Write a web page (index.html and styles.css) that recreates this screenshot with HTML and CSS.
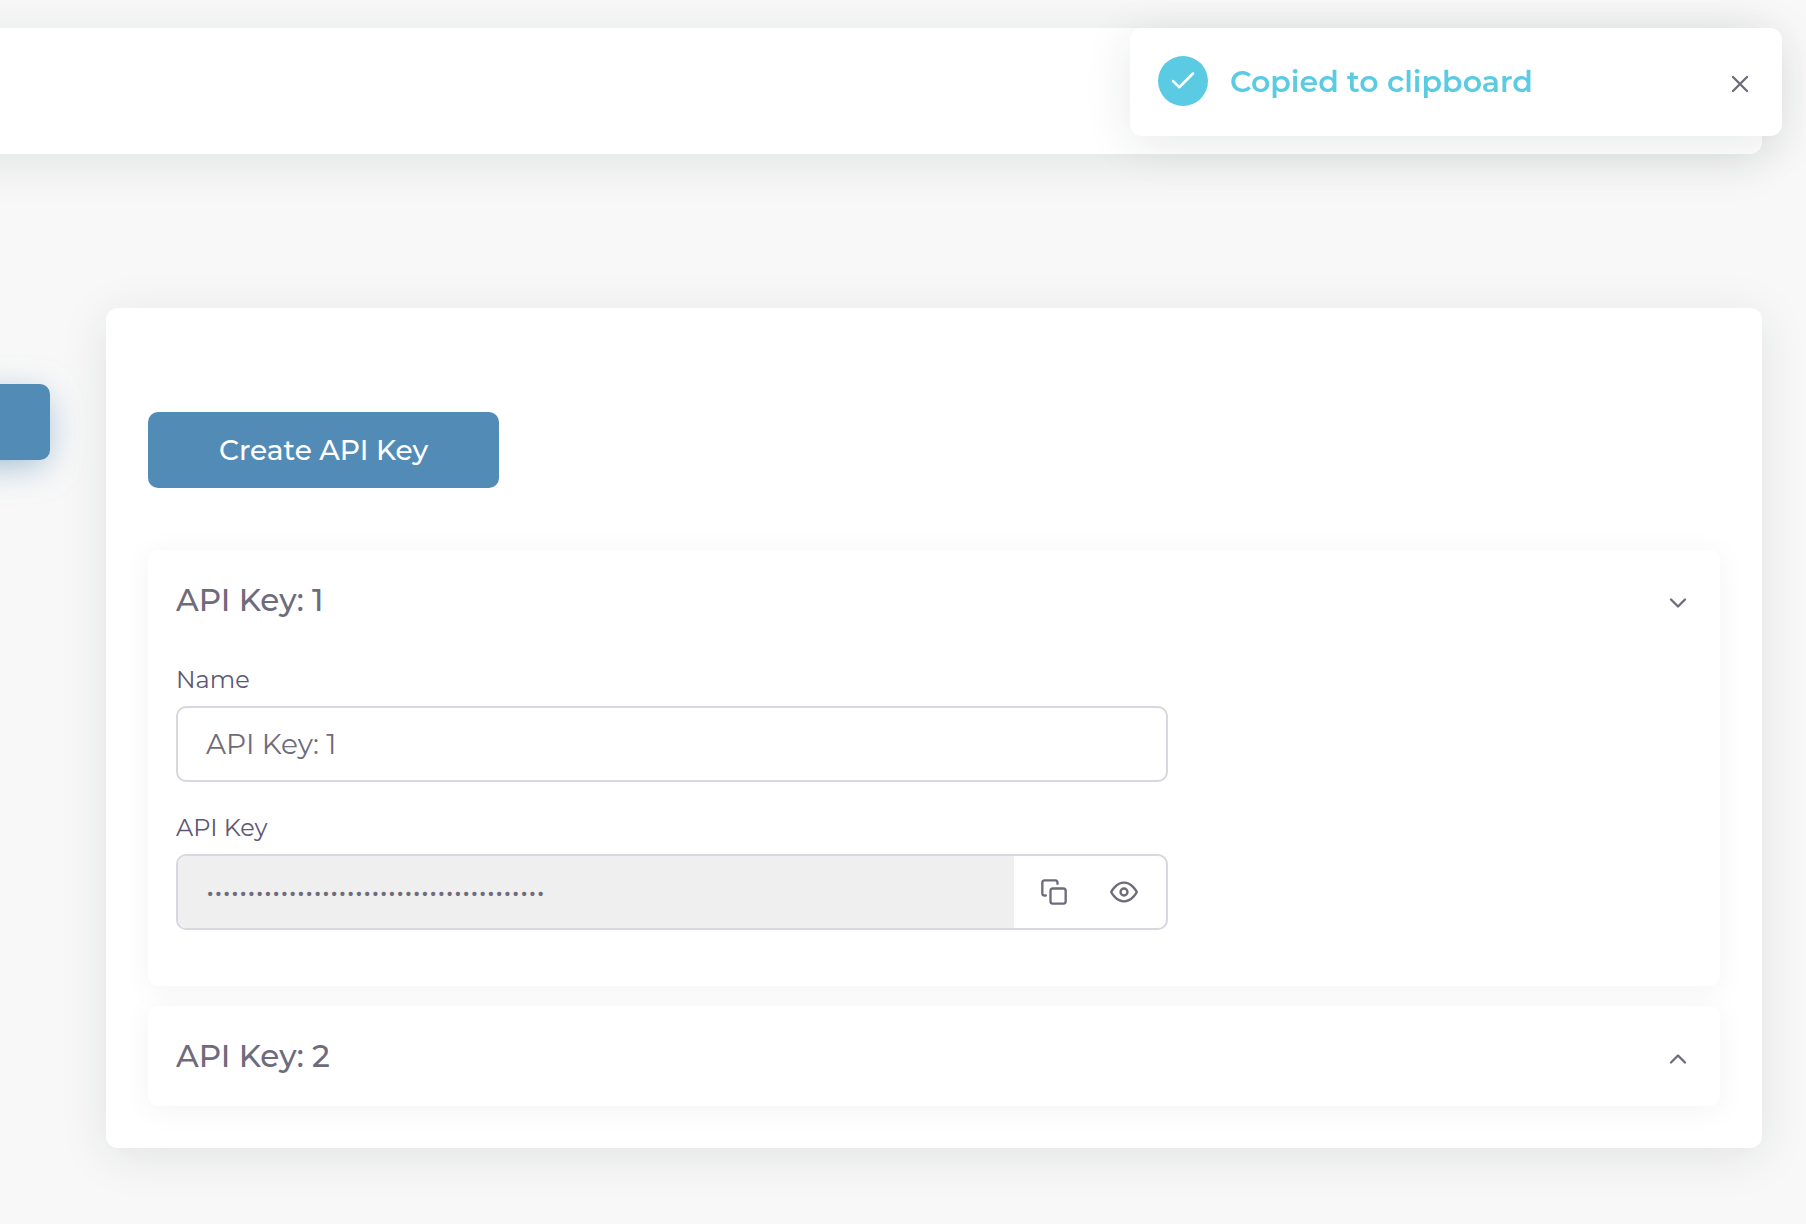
FILE: index.html
```html
<!DOCTYPE html>
<html lang="en">
<head>
<meta charset="utf-8">
<title>API Keys</title>
<link rel="stylesheet" href="styles.css">
</head>
<body>
<header class="navbar"></header>
<div class="layout">
  <nav class="tabs" aria-label="Settings"><a class="tab-active" href="#keys" aria-label="API keys"></a></nav>
  <main class="card" id="keys">
    <button class="btn-primary" type="button">Create API Key</button>
    <div class="panels">
      <section class="panel">
        <button class="panel-header" type="button" aria-expanded="true">
          <span>API Key: 1</span>
          <svg class="chevron" viewBox="0 0 24 24" aria-hidden="true"><path d="M6 9l6 6 6-6"/></svg>
        </button>
        <div class="panel-body">
          <div class="field">
            <label for="name">Name</label>
            <div class="control"><input id="name" type="text" value="API Key: 1"></div>
          </div>
          <div class="field">
            <label for="key">API Key</label>
            <div class="control">
              <input id="key" class="secret" type="password" readonly value="00000000000000000000000000000000000000000">
              <div class="actions">
                <button class="icon-btn" type="button" aria-label="Copy key">
                  <svg viewBox="0 0 24 24" aria-hidden="true"><rect x="9" y="9" width="13" height="13" rx="2"/><path d="M5 15H4a2 2 0 0 1-2-2V4a2 2 0 0 1 2-2h9a2 2 0 0 1 2 2v1"/></svg>
                </button>
                <button class="icon-btn" type="button" aria-label="Show key">
                  <svg viewBox="0 0 24 24" aria-hidden="true"><path d="M1 12s4-8 11-8 11 8 11 8-4 8-11 8-11-8-11-8z"/><circle cx="12" cy="12" r="3"/></svg>
                </button>
              </div>
            </div>
          </div>
        </div>
      </section>
      <section class="panel">
        <button class="panel-header" type="button" aria-expanded="false">
          <span>API Key: 2</span>
          <svg class="chevron" viewBox="0 0 24 24" aria-hidden="true"><path d="M18 15l-6-6-6 6"/></svg>
        </button>
      </section>
    </div>
  </main>
</div>
<div class="toast" role="status">
  <span class="toast-badge"><svg viewBox="0 0 24 24" aria-hidden="true"><path d="M20 6L9 17l-5-5"/></svg></span>
  <span class="toast-text">Copied to clipboard</span>
  <button class="toast-close" type="button" aria-label="Close"><svg viewBox="0 0 24 24" aria-hidden="true"><path d="M18 6L6 18M6 6l12 12"/></svg></button>
</div>
</body>
</html>
```
FILE: styles.css
```css
*, *::before, *::after { box-sizing: border-box; }

body {
  margin: 0;
  padding: 28px 44px 76px 0;
  min-height: 100vh;
  background: #f8f8f8;
  color: #6e6b7b;
  font-family: Montserrat, Inter, sans-serif;
  font-size: 28px;
  line-height: 44px;
}

button, input { font: inherit; color: inherit; }
button { border: 0; background: none; cursor: pointer; }
svg {
  display: block;
  fill: none;
  stroke: currentColor;
  stroke-width: 2;
  stroke-linecap: round;
  stroke-linejoin: round;
}

/* The navbar and the active tab run on past the left edge of the window. */
.navbar {
  height: 126px;
  margin-left: -80px;
  background: #fff;
  border-radius: 12px;
  box-shadow: 0 8px 48px rgba(34, 41, 47, 0.1);
}

.layout {
  display: flex;
  align-items: flex-start;
  gap: 56px;
  margin-top: 154px;
}

.tabs { flex: 0 0 50px; padding-top: 76px; }
.tab-active {
  display: block;
  height: 76px;
  margin-left: -80px;
  background: #538bb7;
  border-radius: 10px;
  box-shadow: 0 8px 36px -6px rgba(83, 139, 183, 0.65);
}

.card {
  flex: 1;
  min-width: 0;
  padding: 104px 42px 42px;
  background: #fff;
  border-radius: 12px;
  box-shadow: 0 8px 48px rgba(34, 41, 47, 0.1);
}

.btn-primary {
  display: block;
  height: 76px;
  padding: 0 71px;
  background: #538bb7;
  border-radius: 10px;
  color: #fff;
  font-weight: 500;
}

.panels {
  display: flex;
  flex-direction: column;
  gap: 20px;
  margin-top: 62px;
}
.panel {
  background: #fff;
  border-radius: 10px;
  box-shadow: 0 4px 30px rgba(0, 0, 0, 0.05);
}
.panel-header {
  display: flex;
  align-items: center;
  justify-content: space-between;
  width: 100%;
  height: 100px;
  padding: 0 28px;
  font-size: 31px;
  font-weight: 500;
  text-align: left;
}
.chevron { width: 28px; height: 28px; margin-top: 6px; }

.panel-body {
  display: flex;
  flex-direction: column;
  gap: 28px;
  padding: 12px 28px 56px;
}
/* Two thirds of a row whose columns have 28px gutters. */
.field { width: calc((100% + 56px) * 2 / 3 - 56px); }
.field label {
  display: block;
  height: 44px;
  line-height: 36px;
  font-size: 24px;
  color: #5e5873;
}
.control {
  display: flex;
  height: 76px;
  overflow: hidden;
  border: 2px solid #d8d6de;
  border-radius: 10px;
}
.control input {
  flex: 1;
  min-width: 0;
  padding: 0 28px;
  border: 0;
  background: none;
  outline: 0;
}
.control .secret { background: #efefef; }
.actions { display: flex; gap: 14px; padding: 0 14px 0 12px; }
.icon-btn { padding: 0 14px; }
.icon-btn svg { width: 28px; height: 28px; }

.toast {
  position: fixed;
  top: 28px;
  right: 24px;
  display: flex;
  align-items: flex-start;
  width: 652px;
  padding: 28px;
  background: #fff;
  border-radius: 12px;
  box-shadow: 0 8px 48px rgba(34, 41, 47, 0.1);
  color: #5bcbe3;
  font-size: 30px;
  font-weight: 600;
}
.toast-badge {
  display: grid;
  place-items: center;
  width: 50px;
  height: 50px;
  border-radius: 50%;
  background: #5bcbe3;
  color: #fff;
}
.toast-badge svg { width: 30px; height: 30px; }
.toast-text { flex: 1; margin-left: 22px; line-height: 52px; }
.toast-close { padding: 14px 0 0; color: #6e6b7b; }
.toast-close svg { width: 28px; height: 28px; }
```
